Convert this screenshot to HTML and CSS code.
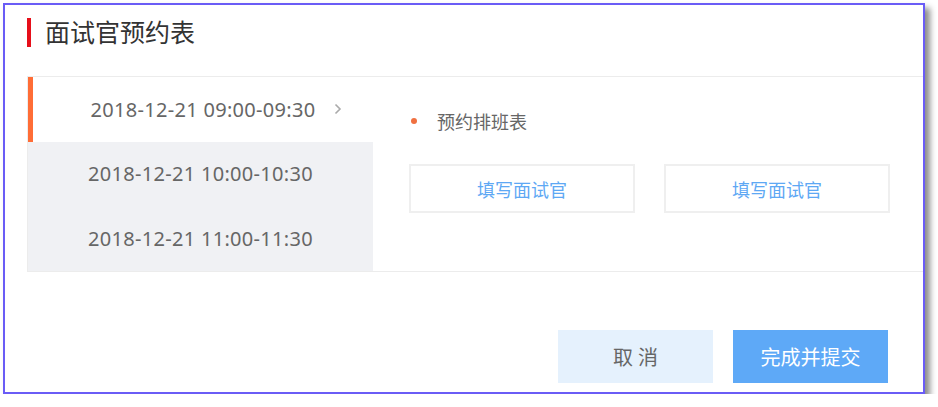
FILE: index.html
```html
<!DOCTYPE html>
<html lang="zh-CN">
<head>
    <meta charset="UTF-8">
    <meta name="viewport" content="width=device-width, initial-scale=1.0">
    <title>面试官预约表</title>
    <link rel="stylesheet" href="styles.css">
</head>
<body>
    <div class="dialog">
        <div class="dialog-header">
            <span class="title-mark"></span>
            <h2 class="dialog-title">面试官预约表</h2>
        </div>

        <div class="schedule">
            <ul class="slot-list">
                <li class="slot active">
                    2018-12-21 09:00-09:30
                    <svg class="slot-arrow" width="8" height="12" viewBox="0 0 8 12">
                        <path d="M1.5 1.5 L6 6 L1.5 10.5" fill="none" stroke="#aaa" stroke-width="1.6"/>
                    </svg>
                </li>
                <li class="slot">2018-12-21 10:00-10:30</li>
                <li class="slot">2018-12-21 11:00-11:30</li>
            </ul>

            <div class="slot-detail">
                <div class="detail-label"><span class="dot"></span>预约排班表</div>
                <div class="interviewer-row">
                    <button class="interviewer-btn">填写面试官</button>
                    <button class="interviewer-btn">填写面试官</button>
                </div>
            </div>
        </div>

        <div class="dialog-footer">
            <button class="btn btn-cancel">取 消</button>
            <button class="btn btn-submit">完成并提交</button>
        </div>
    </div>
</body>
</html>
```

FILE: styles.css
```css
/* page */
body {
    margin: 0;
    background-color: #fff;
    font-family: "Noto Sans", "Noto Sans CJK SC", sans-serif;
}

.dialog {
    margin: 3px 0 0 3px;
    width: 896px;
    height: 387px;
    padding-left: 22px;
    border: 2px solid #6a5cf6;
    background-color: #fff;
    box-shadow: 5px 5px 6px rgba(0, 0, 0, 0.45);
    display: flex;
    flex-direction: column;
    overflow: hidden;
}

.dialog-header {
    display: flex;
    align-items: center;
    margin-top: 13px;
    height: 29px;
}

.title-mark {
    width: 4px;
    height: 29px;
    background-color: #e60f1a;
}

.dialog-title {
    margin: 0 0 0 14px;
    font-size: 25px;
    font-weight: normal;
    color: #333;
    line-height: 29px;
}

/* schedule panel */
.schedule {
    margin-top: 29px;
    display: flex;
    border-top: 1px solid #ececec;
    border-bottom: 1px solid #ececec;
    border-left: 1px solid #ececec;
}

.slot-list {
    list-style: none;
    margin: 0;
    padding: 0;
    width: 345px;
    flex-shrink: 0;
}

.slot {
    position: relative;
    height: 64.6px;
    display: flex;
    align-items: center;
    justify-content: center;
    font-size: 20px;
    letter-spacing: 0.3px;
    color: #666;
    background-color: #f0f1f4;
}

.slot.active {
    background-color: #fff;
    border-left: 5px solid #ff6d36;
}

.slot-arrow {
    position: absolute;
    right: 31px;
    top: 26px;
}

.slot-detail {
    flex: 1;
    padding: 29px 0 0 36px;
}

.detail-label {
    display: flex;
    align-items: center;
    font-size: 18px;
    color: #666;
    height: 30px;
}

.dot {
    width: 6px;
    height: 6px;
    border-radius: 50%;
    background-color: #f07040;
    margin: 0 20px 0 2px;
}

.interviewer-row {
    display: flex;
    gap: 29px;
    margin-top: 28px;
}

.interviewer-btn {
    width: 226px;
    height: 49px;
    background-color: #fff;
    border: 2px solid #efefef;
    color: #5ea8f4;
    font-family: inherit;
    font-size: 18px;
    cursor: pointer;
}

/* footer */
.dialog-footer {
    display: flex;
    justify-content: flex-end;
    gap: 20px;
    margin-top: 58px;
    padding-right: 35px;
}

.btn {
    width: 155px;
    height: 53px;
    border: none;
    font-family: inherit;
    font-size: 20px;
    cursor: pointer;
}

.btn-cancel {
    background-color: #e5f1fd;
    color: #666;
}

.btn-submit {
    background-color: #5ea9f7;
    color: #fff;
}
```
